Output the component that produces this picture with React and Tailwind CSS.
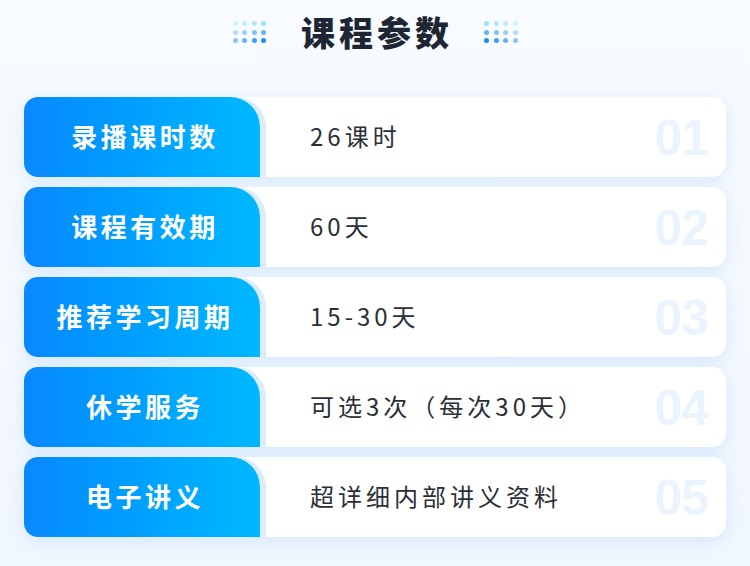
const rows = [
  { label: "录播课时数", value: "26课时", no: "01" },
  { label: "课程有效期", value: "60天", no: "02" },
  { label: "推荐学习周期", value: "15-30天", no: "03" },
  { label: "休学服务", value: "可选3次（每次30天）", no: "04" },
  { label: "电子讲义", value: "超详细内部讲义资料", no: "05" },
];

const dotColors = [
  ["bg-[#d4f1fe]", "bg-[#c2ecfd]", "bg-[#b0e6fd]", "bg-[#9adffc]"],
  ["bg-[#b4dcf9]", "bg-[#98cff8]", "bg-[#7cc3f7]", "bg-[#5db6f6]"],
  ["bg-[#8cc6f6]", "bg-[#66b3f5]", "bg-[#3c9ff4]", "bg-[#1a8cf3]"],
];

function Dots({ mirror }) {
  return (
    <div className="flex flex-col gap-[3.5px]">
      {dotColors.map((row, i) => (
        <div key={i} className="flex gap-[4.5px]">
          {(mirror ? [...row].reverse() : row).map((c, j) => (
            <span key={j} className={`block w-[5px] h-[5px] rounded-full ${c}`} />
          ))}
        </div>
      ))}
    </div>
  );
}

function Row({ label, value, no }) {
  return (
    <div className="flex h-[80px] bg-white rounded-[14px] shadow-[0_4px_18px_rgba(60,140,240,0.16)]">
      <div className="w-[236px] shrink-0 flex items-center justify-center pb-[3px] rounded-tl-[14px] rounded-bl-[14px] rounded-tr-[30px] bg-gradient-to-r from-[#0a88ff] to-[#00b8ff] shadow-[6px_0_0_#dcecfd]">
        <span className="text-white text-[26px] font-bold tracking-[3.5px] pl-[6px]">{label}</span>
      </div>
      <div className="flex-1 flex items-center justify-between pl-[50px] pr-[18px]">
        <span className="text-[#2b2f36] text-[24px] tracking-[4px] pb-[3px]">{value}</span>
        <span className="font-['Liberation_Sans',sans-serif] font-bold text-[50px] tracking-[-1px] text-[#eaf4fe] leading-none pt-[2px]">{no}</span>
      </div>
    </div>
  );
}

export default function App() {
  return (
    <div className="min-h-[566px] bg-gradient-to-b from-[#f8fbff] to-[#f1f7fe] font-['Noto_Sans_CJK_SC',sans-serif]">
      <div className="flex items-center justify-center gap-[31px] h-[64px]">
        <Dots />
        <h1 className="text-[34px] font-black text-[#1e2533] tracking-[4px] pl-[4px] leading-[40px]">课程参数</h1>
        <Dots mirror />
      </div>
      <div className="flex flex-col gap-[10px] px-[24px] pt-[33px]">
        {rows.map((r) => (
          <Row key={r.no} {...r} />
        ))}
      </div>
    </div>
  );
}
